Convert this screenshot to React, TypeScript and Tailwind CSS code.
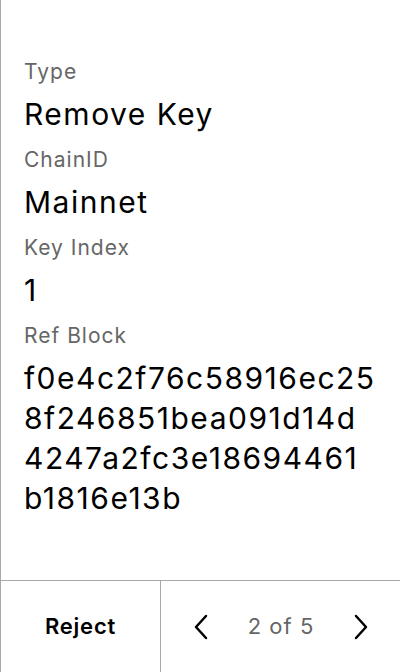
import React from "react";

function Field({ label, value }: { label: string; value: React.ReactNode }) {
  return (
    <div className="flex flex-col">
      <div className="text-[21px] leading-[28px] tracking-[1px] text-[#666666]">{label}</div>
      <div className="mt-[8px] text-[30px] leading-[40px] tracking-[1.5px] text-black">{value}</div>
    </div>
  );
}

export default function App() {
  return (
    <div
      className="w-[400px] h-[672px] bg-white border-l border-[#a8a8a8] flex flex-col"
      style={{ fontFamily: "Inter, 'Noto Sans', sans-serif" }}
    >
      <div className="flex-1 flex flex-col gap-[12px] pl-[23px] pr-[16px] pt-[58px]">
        <Field label="Type" value="Remove Key" />
        <Field label="ChainID" value="Mainnet" />
        <Field label="Key Index" value="1" />
        <Field
          label="Ref Block"
          value={
            <div className="flex flex-col">
              <span>f0e4c2f76c58916ec25</span>
              <span>8f246851bea091d14d</span>
              <span>4247a2fc3e18694461</span>
              <span>b1816e13b</span>
            </div>
          }
        />
      </div>
      <div className="h-[92px] border-t border-[#a8a8a8] flex">
        <div className="w-[160px] border-r border-[#a8a8a8] flex items-center justify-center text-[22px] tracking-[0.8px] font-semibold text-black">
          Reject
        </div>
        <div className="flex-1 flex items-center justify-between pl-[32px] pr-[31px]">
          <svg width="16" height="26" viewBox="0 0 16 26" fill="none" stroke="black" strokeWidth="2.5" strokeLinecap="round" strokeLinejoin="round">
            <path d="M13 2 L3 13 L13 24" />
          </svg>
          <span className="text-[22px] tracking-[1px] text-[#666666]">2 of 5</span>
          <svg width="16" height="26" viewBox="0 0 16 26" fill="none" stroke="black" strokeWidth="2.5" strokeLinecap="round" strokeLinejoin="round">
            <path d="M3 2 L13 13 L3 24" />
          </svg>
        </div>
      </div>
    </div>
  );
}
